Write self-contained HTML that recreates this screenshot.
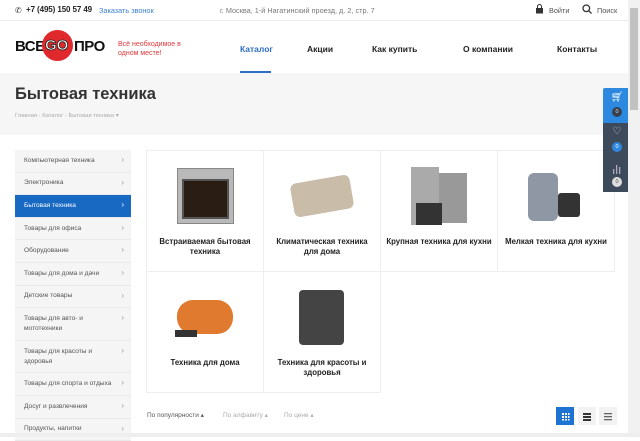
<!DOCTYPE html>
<html><head><meta charset="utf-8"><style>
*{margin:0;padding:0;box-sizing:border-box}
body{width:640px;height:437px;overflow:hidden;font-family:"Liberation Sans",sans-serif;background:#fff;position:relative;color:#333}
.a{position:absolute}
.top{left:0;top:0;width:628px;height:21px;border-bottom:1px solid #eee;font-size:8px}
.nav a{position:absolute;top:44px;font-size:8.5px;font-weight:bold;color:#222}
.band{left:0;top:73px;width:628px;height:62px;background:#f6f6f6}
.side{left:15px;top:150px;width:116px;background:#f5f5f6}
.side div{position:relative;border-bottom:1px solid #e9e9ea;padding:5.8px 16px 5.8px 9px;font-size:6.6px;color:#555;line-height:10px;white-space:nowrap}
.side div.w{white-space:normal;padding-right:20px}
.side div:after{content:"›";position:absolute;right:7px;top:5px;color:#999;font-size:8px}
.side div.act{background:#1769c2;color:#fff}
.side div.act:after{color:#fff}
.cell{position:absolute;width:117px;height:121px;border-right:1px solid #eee;border-bottom:1px solid #eee;text-align:center;font-size:7.8px;font-weight:bold;color:#222}
.cell p{position:absolute;left:5px;right:5px;top:86px;line-height:10px}
.vb{top:407px;width:18px;height:18px;background:#f2f2f2}
</style></head><body>
<div class="a top">
<span class="a" style="left:15px;top:6px;font-size:8px">✆</span>
<span class="a" style="left:26px;top:5px;font-weight:bold;font-size:8px;color:#222;letter-spacing:-0.1px">+7 (495) 150 57 49</span>
<span class="a" style="left:99px;top:6px;color:#3a7fd5;font-size:7.3px">Заказать звонок</span>
<span class="a" style="left:220px;top:6px;color:#777;font-size:7.3px">г. Москва, 1-й Нагатинский проезд, д. 2, стр. 7</span>
<span class="a" style="left:535px;top:4px;width:8px;height:9px"><svg width="9" height="10"><rect x="1" y="4" width="7" height="5.5" fill="#333"/><path d="M2.5 4V2.5a2 2 0 0 1 4 0V4" stroke="#333" fill="none"/></svg></span>
<span class="a" style="left:549px;top:6px;color:#555;font-size:7.3px">Войти</span>
<span class="a" style="left:582px;top:4px"><svg width="10" height="10"><circle cx="4.3" cy="4.3" r="3.3" stroke="#333" stroke-width="1.3" fill="none"/><path d="M6.8 6.8L9.5 9.5" stroke="#333" stroke-width="1.3"/></svg></span>
<span class="a" style="left:597px;top:6px;color:#555;font-size:7.3px">Поиск</span>
</div>
<div class="a" style="left:15px;top:38px;font-size:15px;font-weight:bold;color:#111;letter-spacing:-0.5px">ВСЕ</div>
<div class="a" style="left:42px;top:30px;width:31px;height:31px;border-radius:50%;background:#e0292c"></div>
<div class="a" style="left:45px;top:37px;font-size:15px;font-weight:bold;color:#fff;-webkit-text-stroke:0.8px #222">GO</div>
<div class="a" style="left:74px;top:38px;font-size:15px;font-weight:bold;color:#111;letter-spacing:-0.5px">ПРО</div>
<div class="a" style="left:118px;top:40px;font-size:7px;color:#e0383c;line-height:9px">Всё необходимое в<br>одном месте!</div>
<div class="nav"><a style="left:240px;color:#2b6fc6">Каталог</a><a style="left:307px">Акции</a><a style="left:372px">Как купить</a><a style="left:463px">О компании</a><a style="left:557px">Контакты</a></div>
<div class="a" style="left:240px;top:71px;width:31px;height:2px;background:#2b6fc6"></div>
<div class="a band"></div>
<div class="a" style="left:15px;top:85px;font-size:16.5px;font-weight:bold;color:#333">Бытовая техника</div>
<div class="a" style="left:15px;top:113px;font-size:5.8px;color:#aaa">Главная - Каталог - Бытовая техника ▾</div>
<div class="a side">
<div>Компьютерная техника</div><div>Электроника</div><div class="act">Бытовая техника</div><div>Товары для офиса</div><div>Оборудование</div><div>Товары для дома и дачи</div><div>Детские товары</div><div class="w">Товары для авто- и мототехники</div><div class="w">Товары для красоты и здоровья</div><div>Товары для спорта и отдыха</div><div>Досуг и развлечения</div><div>Продукты, напитки</div>
</div>
<div class="a" style="left:146px;top:150px;width:469px;height:1px;background:#eee"></div>
<div class="a" style="left:146px;top:150px;width:1px;height:243px;background:#eee"></div>
<div class="cell" style="left:147px;top:151px"><div class="a" style="left:30px;top:17px;width:57px;height:56px;background:#b9b9b9;border:1px solid #888"><div class="a" style="left:4px;top:10px;width:47px;height:40px;background:#2a1d14;border:2px solid #555"></div></div><p>Встраиваемая бытовая техника</p></div>
<div class="cell" style="left:264px;top:151px"><div class="a" style="left:28px;top:28px;width:60px;height:34px;background:#c9bca9;border-radius:6px;transform:rotate(-10deg)"></div><p>Климатическая техника для дома</p></div>
<div class="cell" style="left:381px;top:151px"><div class="a" style="left:30px;top:16px;width:28px;height:58px;background:#aaa"></div><div class="a" style="left:58px;top:22px;width:28px;height:50px;background:#999"></div><div class="a" style="left:35px;top:52px;width:26px;height:22px;background:#333"></div><p>Крупная техника для кухни</p></div>
<div class="cell" style="left:498px;top:151px"><div class="a" style="left:30px;top:22px;width:30px;height:48px;background:#8f96a4;border-radius:6px"></div><div class="a" style="left:60px;top:42px;width:22px;height:24px;background:#333;border-radius:3px"></div><p>Мелкая техника для кухни</p></div>
<div class="cell" style="left:147px;top:272px"><div class="a" style="left:30px;top:28px;width:56px;height:34px;background:#e07a2e;border-radius:16px"></div><div class="a" style="left:28px;top:58px;width:22px;height:7px;background:#333"></div><p style="top:86px">Техника для дома</p></div>
<div class="cell" style="left:264px;top:272px"><div class="a" style="left:35px;top:18px;width:45px;height:55px;background:#444;border-radius:4px"></div><p>Техника для красоты и здоровья</p></div>
<div class="a" style="left:147px;top:411px;font-size:6.5px;color:#555">По популярности ▴</div>
<div class="a" style="left:223px;top:411px;font-size:6.5px;color:#aaa">По алфавиту ▴</div>
<div class="a" style="left:284px;top:411px;font-size:6.5px;color:#aaa">По цене ▴</div>
<div class="a vb" style="left:556px;background:#1e73d2"><svg width="18" height="18"><g fill="#fff"><rect x="6" y="6" width="2" height="2"/><rect x="9" y="6" width="2" height="2"/><rect x="12" y="6" width="1.5" height="2"/><rect x="6" y="9" width="2" height="2"/><rect x="9" y="9" width="2" height="2"/><rect x="12" y="9" width="1.5" height="2"/><rect x="6" y="12" width="2" height="1.5"/><rect x="9" y="12" width="2" height="1.5"/><rect x="12" y="12" width="1.5" height="1.5"/></g></svg></div>
<div class="a vb" style="left:578px"><svg width="18" height="18"><g fill="#333"><rect x="5" y="6" width="8" height="2"/><rect x="5" y="9" width="8" height="2"/><rect x="5" y="12" width="8" height="2"/></g></svg></div>
<div class="a vb" style="left:599px"><svg width="18" height="18"><g fill="#666"><rect x="5" y="6" width="8" height="1.3"/><rect x="5" y="9" width="8" height="1.3"/><rect x="5" y="12" width="8" height="1.3"/></g></svg></div>
<div class="a" style="left:0;top:433px;width:640px;height:4px;background:#eee"></div>
<div class="a" style="left:603px;top:88px;width:28px;height:35px;background:#2d88e0;border-radius:2px 0 0 0"><div style="color:#fff;font-size:10px;text-align:center;margin-top:4px">🛒︎</div><div class="a" style="left:9px;top:19px;width:10px;height:10px;border-radius:50%;background:#37414f;color:#ddd;font-size:5.5px;text-align:center;line-height:10px">0</div></div>
<div class="a" style="left:603px;top:123px;width:28px;height:35px;background:#3d4a5c"><div style="color:#ccd;font-size:10px;text-align:center;margin-top:3px">♡</div><div class="a" style="left:9px;top:19px;width:10px;height:10px;border-radius:50%;background:#2d88e0;color:#fff;font-size:5.5px;text-align:center;line-height:10px">0</div></div>
<div class="a" style="left:603px;top:158px;width:28px;height:34px;background:#3d4a5c"><svg class="a" style="left:9px;top:6px" width="10" height="10"><g fill="#aab"><rect x="1" y="5" width="1.3" height="5"/><rect x="4" y="1" width="1.3" height="9"/><rect x="7" y="3" width="1.3" height="7"/></g></svg><div class="a" style="left:9px;top:19px;width:10px;height:10px;border-radius:50%;background:#ddd;color:#555;font-size:5.5px;text-align:center;line-height:10px">0</div></div>
<div class="a" style="left:628px;top:0;width:12px;height:433px;background:#f1f1f1"></div>
<div class="a" style="left:630px;top:8px;width:8px;height:102px;background:#c1c1c1"></div>
</body></html>
